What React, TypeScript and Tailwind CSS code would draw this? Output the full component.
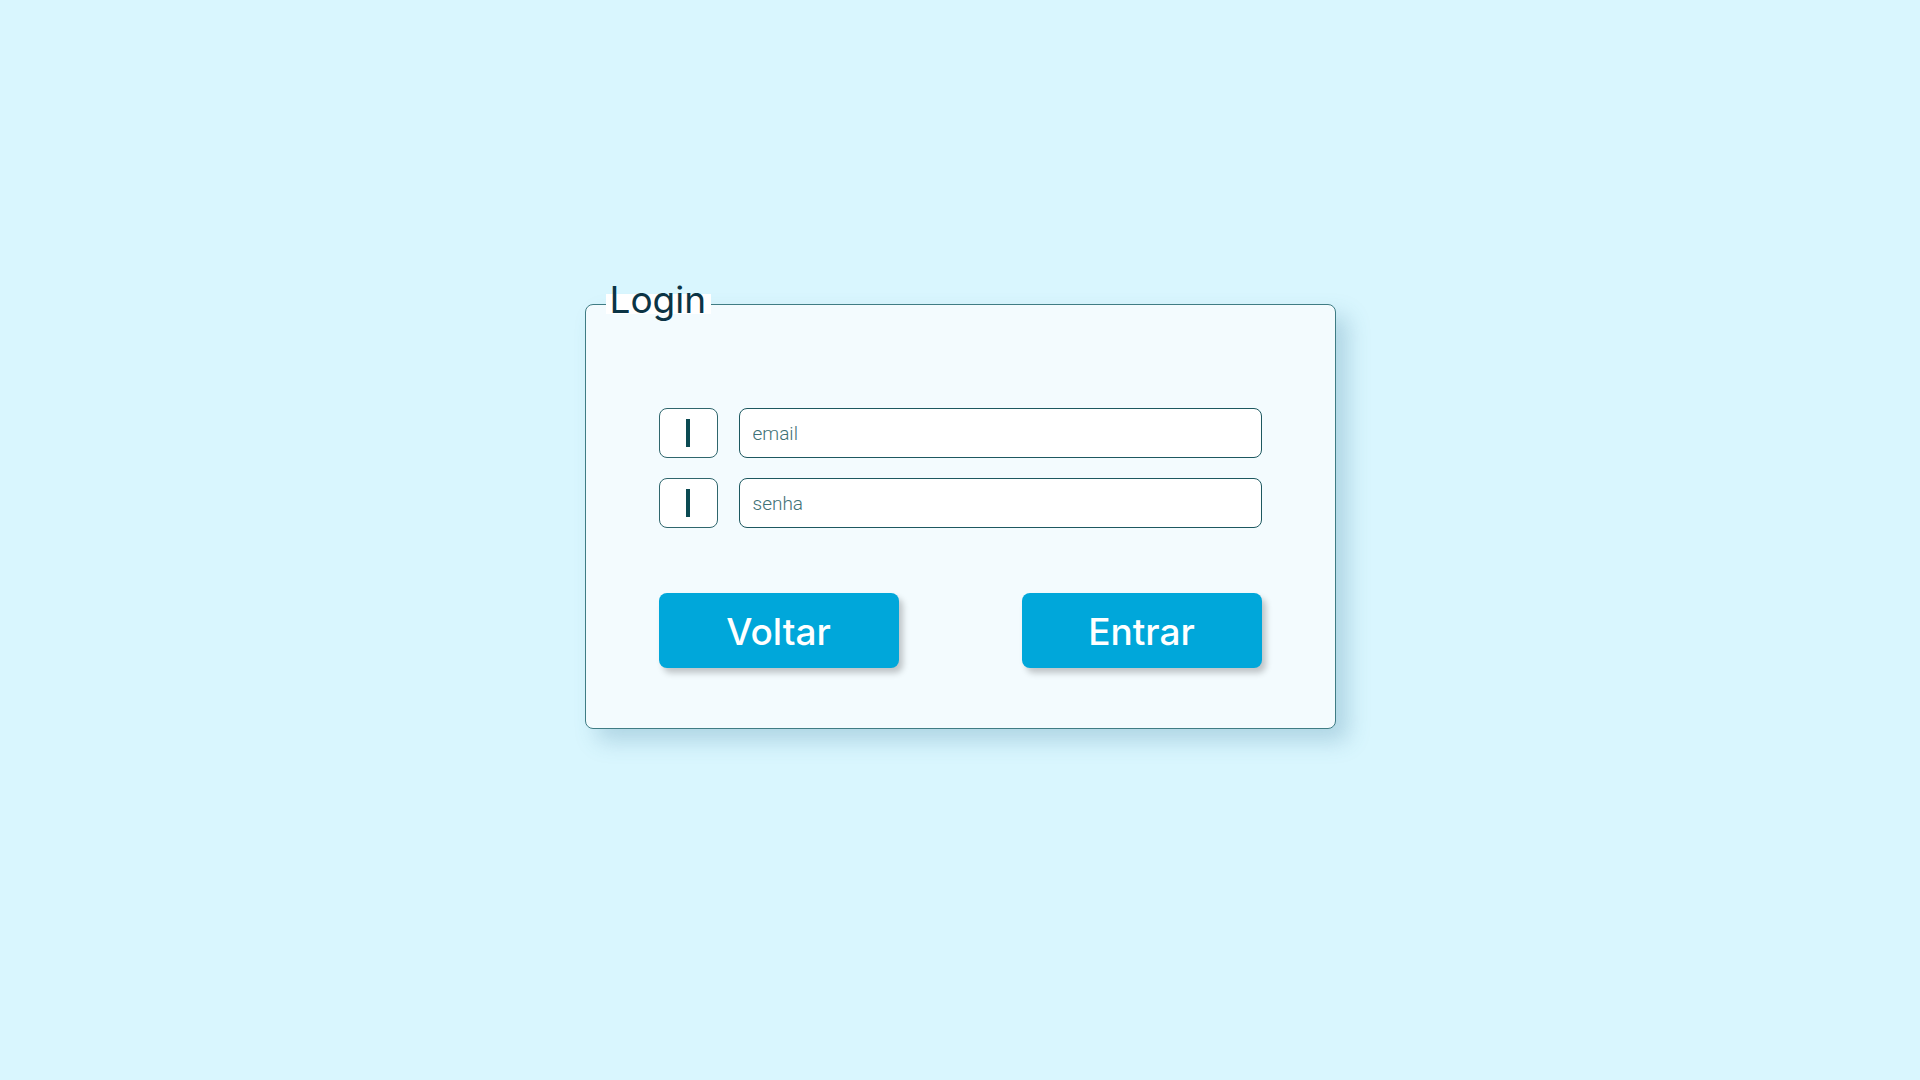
import React from "react";

export default function App() {
  return (
    <div className="min-h-screen w-full bg-[#d9f6fe] flex justify-center pt-[304px]" style={{ fontFamily: "Inter, 'Noto Sans', sans-serif" }}>
      <div className="relative w-[751px] h-[425px] border border-[#3f7c84] rounded-[8px] bg-[#f3fbfe] shadow-[12px_12px_22px_rgba(70,130,160,0.28)] pl-[73px] pt-[103px]">
        <div className="absolute left-[20px] top-[-11px] h-[20px] w-[105px] bg-white" />
        <div className="absolute left-[24px] top-[-27px] text-[37px] leading-[44px] text-[#0b3445] font-normal" style={{ fontFamily: "Inter, sans-serif" }}>
          Login
        </div>
        <div className="flex flex-col gap-[20px]">
          {["email", "senha"].map((p) => (
            <div key={p} className="flex gap-[21px]">
              <div className="w-[59px] h-[50px] border border-[#2f666d] rounded-[8px] bg-white flex items-center justify-center">
                <div className="w-[4px] h-[28px] bg-[#0b4a52]" />
              </div>
              <input
                placeholder={p}
                className="w-[523px] h-[50px] border border-[#1d5860] rounded-[8px] bg-white px-[13px] text-[19px] font-light outline-none placeholder:text-[#3f7176]"
                style={{ fontFamily: "Roboto, sans-serif" }}
              />
            </div>
          ))}
        </div>
        <div className="mt-[65px] w-[603px] flex justify-between">
          {["Voltar", "Entrar"].map((t) => (
            <button
              key={t}
              className="w-[240px] h-[75px] pt-[3px] rounded-[8px] bg-[#00a7da] text-white text-[37px] font-medium shadow-[4px_5px_6px_rgba(0,0,0,0.22)]"
              style={{ fontFamily: "Inter, sans-serif" }}
            >
              {t}
            </button>
          ))}
        </div>
      </div>
    </div>
  );
}
